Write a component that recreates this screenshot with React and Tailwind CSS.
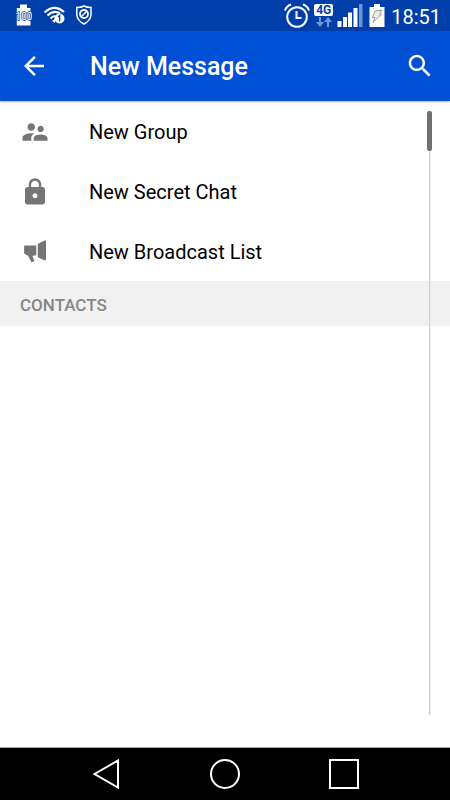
const menuItems = [
  {
    label: 'New Group',
    icon: (
      <path d="M16.5 12c1.38 0 2.49-1.12 2.49-2.5S17.88 7 16.5 7C15.12 7 14 8.12 14 9.5s1.12 2.5 2.5 2.5zM9 11c1.66 0 2.99-1.34 2.99-3S10.66 5 9 5C7.34 5 6 6.34 6 8s1.34 3 3 3zm7.5 3c-1.83 0-5.5.92-5.5 2.75V19h11v-2.25c0-1.83-3.67-2.75-5.5-2.75zM9 13c-2.33 0-7 1.17-7 3.5V19h7v-2.25c0-.85.33-2.34 2.37-3.47C10.5 13.1 9.66 13 9 13z" />
    ),
  },
  {
    label: 'New Secret Chat',
    icon: (
      <path d="M18 8h-1V6c0-2.76-2.24-5-5-5S7 3.24 7 6v2H6c-1.1 0-2 .9-2 2v10c0 1.1.9 2 2 2h12c1.1 0 2-.9 2-2V10c0-1.1-.9-2-2-2zm-6 9c-1.1 0-2-.9-2-2s.9-2 2-2 2 .9 2 2-.9 2-2 2zm3.1-9H8.9V6c0-1.71 1.39-3.1 3.1-3.1 1.71 0 3.1 1.39 3.1 3.1v2z" />
    ),
  },
  {
    label: 'New Broadcast List',
    icon: (
      <path d="M3.9 6.8H13v8h-2.200l-.8.5 1.6 3.800-2.4 1-2.600-4.900L3.300 13.200V7.400a.6.6 0 0 1 .6-.6zM14.200 5.600l5.400-2.900a.8.8 0 0 1 1.200.7V17.900a.8.8 0 0 1-1.200.7L14.200 16.200z" />
    ),
  },
];

function StatusBar() {
  return (
    <div className="flex h-[31px] items-center bg-[#003fa9] pl-4 pr-[9px] text-white">
      <svg className="h-[31px] w-4" viewBox="0 0 16 31" aria-hidden="true">
        <path d="M4 4.500h7V8h3.500v17.500H0.800V8H4z" fill="#fff" />
        <text x="8" y="20" textAnchor="middle" className="font-['Roboto',sans-serif] text-[10px]" fill="#fff" stroke="#003fa9" strokeWidth="1.400" paintOrder="stroke">100</text>
      </svg>
      <svg className="ml-3 h-[31px] w-[22px]" viewBox="0 0 22 31" aria-hidden="true">
        <g fill="none" stroke="#fff" strokeWidth="2.200">
          <path d="M0.500 12.500Q10 3.500 20 12" />
          <path d="M3.500 15.500Q10 9.500 16 13.500" />
          <path d="M6.500 18.500Q9 16 11.500 16" />
        </g>
        <path d="M8 21l3-2v4z" fill="#fff" />
        <circle cx="15.500" cy="18.500" r="5" fill="#fff" />
        <path d="M14 17l1.700-1.500v6" fill="none" stroke="#003fa9" strokeWidth="1.300" />
      </svg>
      <svg className="ml-2.5 h-[31px] w-4" viewBox="0 0 16 31" aria-hidden="true">
        <path d="M0.800 7.500Q5 7.500 8 6Q11 7.500 15 7.500V15Q14.500 20.500 8 24Q1.300 20.500 0.800 15z" fill="none" stroke="#fff" strokeWidth="1.500" />
        <circle cx="8" cy="14" r="4" fill="none" stroke="#fff" strokeWidth="1.800" />
        <path d="M5.500 16.500l5-5" stroke="#fff" strokeWidth="1.500" />
      </svg>

      <svg className="ml-auto h-[31px] w-[26px]" viewBox="0 0 26 31" aria-hidden="true">
        <g fill="none" stroke="#fff" strokeWidth="2">
          <circle cx="13" cy="17" r="9.800" />
          <path d="M12.500 11V18h5" />
          <path d="M1 10.500Q2.500 6 7 4.500M25 10.500Q23.500 6 19 4.500" />
        </g>
      </svg>
      <div className="ml-1 flex w-[19px] flex-col items-center gap-px">
        <span className="h-3 w-full rounded-[2px] bg-white text-center text-[12px] leading-3 font-bold text-[#003fa9]">4G</span>
        <svg className="h-[10px] w-4" viewBox="0 0 16 10" fill="#7196d4" aria-hidden="true">
          <path d="M3 0h2v5h3L4 10 0 5h3zM11 10h2V5h3L12 0 8 5h3z" />
        </svg>
      </div>
      <svg className="ml-1 h-[31px] w-[26px]" viewBox="0 0 26 31" aria-hidden="true">
        <path d="M0.500 21h4v6h-4zM6 17h4v10H6zM11 12.500h4V27h-4zM16.500 8h4v19h-4z" fill="#fff" />
        <path d="M22 4h3.500v23H22z" fill="#6d93d2" />
      </svg>
      <svg className="ml-1.5 h-[31px] w-4" viewBox="0 0 16 31" aria-hidden="true">
        <path d="M5 4h6v3h4.500v20H0.500V7H5z" fill="#fff" />
        <path d="M6 11l7-.8-2.500 4h2L4 22.500l2-5H3.500z" fill="#eee" stroke="#999" strokeWidth="1" />
      </svg>
      <time className="ml-1.5 pt-0.5 text-[20px] leading-6">18:51</time>
    </div>
  );
}

export default function App() {
  return (
    <div className="flex min-h-screen flex-col bg-white font-['Roboto',sans-serif] text-black">
      <StatusBar />
      <header className="flex h-[70px] items-center bg-[#0050d5] px-[15px] pl-[19px] text-white shadow-[0_1px_2px_rgba(0,0,0,0.3)]">
        <button type="button" aria-label="Back">
          <svg className="size-[30px]" viewBox="0 0 24 24" fill="currentColor" aria-hidden="true">
            <path d="M20 11H7.830l5.590-5.590L12 4l-8 8 8 8 1.410-1.410L7.830 13H20v-2z" />
          </svg>
        </button>
        <h1 className="ml-[41px] flex-1 pt-0.5 text-[25px] leading-8 font-medium">New Message</h1>
        <button type="button" aria-label="Search">
          <svg className="size-[30px]" viewBox="0 0 24 24" fill="currentColor" aria-hidden="true">
            <path d="M15.500 14h-.79l-.28-.27C15.410 12.590 16 11.110 16 9.500 16 5.910 13.090 3 9.500 3S3 5.910 3 9.500 5.910 16 9.500 16c1.610 0 3.090-.59 4.230-1.570l.27.28v.79l5 4.990L20.490 19l-4.990-5zm-6 0C7.010 14 5 11.990 5 9.500S7.010 5 9.500 5 14 7.010 14 9.500 11.990 14 9.500 14z" />
          </svg>
        </button>
      </header>

      <main className="relative flex-1">
        <ul>
          {menuItems.map(({ label, icon }) => (
            <li key={label}>
              <button type="button" className="flex h-[60px] w-full items-center gap-[39px] pt-0.5 pl-5 text-left text-[20px] leading-6">
                <svg className="size-[30px] text-[#757575]" viewBox="0 0 24 24" fill="currentColor" aria-hidden="true">
                  {icon}
                </svg>
                {label}
              </button>
            </li>
          ))}
        </ul>
        <h2 className="flex h-[45px] items-center bg-[#f1f1f1] pt-0.5 pl-5 text-[17px] leading-6 font-medium text-[#868686]">CONTACTS</h2>
        <div className="absolute top-[10px] right-[18px] bottom-8 flex w-[5px] justify-center" aria-hidden="true">
          <div className="h-full w-0.5 border-r border-[#ececec] bg-[#cfcfcf]" />
          <div className="absolute top-0 h-10 w-[5px] rounded-[2px] bg-[#707070]" />
        </div>
      </main>

      <nav className="flex h-[53px] items-center justify-between border-t border-[#aaaaaa] bg-black px-[91px] text-white">
        <button type="button" aria-label="Back">
          <svg className="size-[30px]" viewBox="0 0 30 30" fill="none" stroke="currentColor" strokeWidth="2" aria-hidden="true">
            <path d="M3.500 15L27 1.500v27z" />
          </svg>
        </button>
        <button type="button" aria-label="Home">
          <svg className="size-[30px]" viewBox="0 0 30 30" fill="none" stroke="currentColor" strokeWidth="2" aria-hidden="true">
            <circle cx="15" cy="15" r="14" />
          </svg>
        </button>
        <button type="button" aria-label="Recent apps">
          <svg className="size-[30px]" viewBox="0 0 30 30" fill="none" stroke="currentColor" strokeWidth="2" aria-hidden="true">
            <path d="M1 1h28v28H1z" />
          </svg>
        </button>
      </nav>
    </div>
  );
}
